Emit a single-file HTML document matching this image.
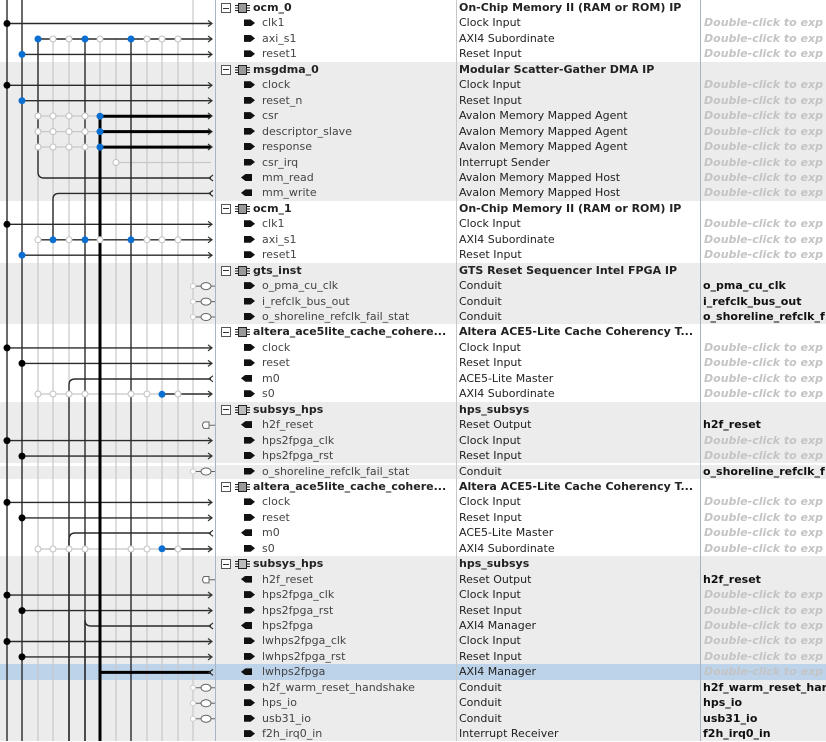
<!DOCTYPE html>
<html><head><meta charset="utf-8"><style>
body{margin:0;width:826px;height:741px;overflow:hidden;background:#fff;font-family:"DejaVu Sans","Liberation Sans",sans-serif;font-size:11px;position:relative}
.r{position:absolute;left:0;width:826px;height:15.45px}
.w{background:#fff}.g{background:#ececec}.s{background:#bcd3ea}
.t{position:absolute;white-space:nowrap;line-height:15px;top:0}
.n{left:262px;color:#444}
.gn{left:253px;font-weight:bold;color:#222}
.d{left:459px;color:#222}
.gd{font-weight:bold}
.e{left:704px;color:#c4c4c4;font-style:italic;font-weight:bold}
.ex{left:703px;color:#111;font-weight:bold}
.box{position:absolute;left:221px;top:3px;width:8px;height:8px;border:1px solid #555;background:#fff}
.box:after{content:"";position:absolute;left:1px;top:3.5px;width:6px;height:1px;background:#333}
.chip{position:absolute;left:238px;top:3px;width:7px;height:8px;background:#999;border:1px solid #222}
.chip:before,.chip:after{content:"";position:absolute;top:1px;width:3px;height:6px;background:repeating-linear-gradient(#222 0 1px,transparent 1px 2.5px)}
.chip:before{left:-4px}.chip:after{left:8px}
.pi{position:absolute;left:244px;top:4px;width:11px;height:7px;background:#111;clip-path:polygon(0 0,60% 0,100% 50%,60% 100%,0 100%)}
.out{left:241px;clip-path:polygon(40% 0,100% 0,100% 100%,40% 100%,0 50%)}
.vl{position:absolute;top:0;width:1px;height:741px}
</style></head><body>
<div class="r w" style="top:0px;height:61.8px"></div>
<div class="r g" style="top:61.8px;height:139px"></div>
<div class="r w" style="top:200.85px;height:61.8px"></div>
<div class="r g" style="top:262.65px;height:61.8px"></div>
<div class="r w" style="top:324.45px;height:77.25px"></div>
<div class="r g" style="top:401.7px;height:61.8px"></div>
<div class="r g" style="top:465px;height:15px"></div>
<div class="r w" style="top:478.95px;height:77.25px"></div>
<div class="r g" style="top:556.2px;height:185px"></div>
<div class="r s" style="top:664.35px"></div>
<div style="position:absolute;left:0;top:465px;width:215px;height:1px;background:#fff"></div>
<div class="vl" style="left:215px;background:#a8b4c4"></div>
<div class="vl" style="left:456px;background:#c8c8c8"></div>
<div class="vl" style="left:700px;background:#a8b4c4"></div>

<svg width="216" height="741" style="position:absolute;left:0;top:0" fill="none">
<g stroke="#c8c8c8" stroke-width="1.2">
<line x1="38" y1="39" x2="38" y2="741"/><line x1="53" y1="39" x2="53" y2="741"/><line x1="69" y1="39" x2="69" y2="741"/>
<line x1="116" y1="39" x2="116" y2="741"/><line x1="147" y1="39" x2="147" y2="741"/><line x1="162" y1="39" x2="162" y2="741"/><line x1="178" y1="39" x2="178" y2="741"/><line x1="193" y1="0" x2="193" y2="741"/>
<line x1="100" y1="39" x2="100" y2="116"/>
<line x1="38" y1="116" x2="100" y2="116"/><line x1="38" y1="131.6" x2="100" y2="131.6"/><line x1="38" y1="147" x2="100" y2="147"/>
<line x1="116" y1="162.5" x2="211" y2="162.5"/>
<line x1="38" y1="394" x2="162" y2="394"/><line x1="38" y1="549" x2="162" y2="549"/>
</g>
<g stroke="#2a2a2a" stroke-width="1.4">
<line x1="7" y1="0" x2="7" y2="741"/><line x1="22" y1="0" x2="22" y2="741"/>
<path d="M38 39 V172 Q38 178 44 178 H211"/>
<path d="M211 193.4 H59 Q53 193.4 53 199 V240"/>
<line x1="85" y1="39" x2="85" y2="741"/><line x1="131" y1="39" x2="131" y2="741"/>
<path d="M69 741 V385 Q69 379 75 379 H211"/>
<path d="M69 741 V540 Q69 533 75 533 H211"/>
<path d="M85 741 V620 Q85 626 91 626 H211"/>
<line x1="162" y1="394" x2="211" y2="394"/><line x1="162" y1="549" x2="211" y2="549"/>
<line x1="7" y1="23.5" x2="211" y2="23.5"/><line x1="38" y1="39" x2="211" y2="39"/><line x1="22" y1="54.4" x2="211" y2="54.4"/>
<line x1="7" y1="85.3" x2="211" y2="85.3"/><line x1="22" y1="100.7" x2="211" y2="100.7"/>
<line x1="7" y1="224.3" x2="211" y2="224.3"/><line x1="38" y1="239.8" x2="211" y2="239.8"/><line x1="22" y1="255.2" x2="211" y2="255.2"/>
<line x1="7" y1="347.9" x2="211" y2="347.9"/><line x1="22" y1="363.4" x2="211" y2="363.4"/>
<line x1="7" y1="440.6" x2="211" y2="440.6"/><line x1="22" y1="456.1" x2="211" y2="456.1"/>
<line x1="7" y1="502.4" x2="211" y2="502.4"/><line x1="22" y1="517.9" x2="211" y2="517.9"/>
<line x1="7" y1="595.1" x2="211" y2="595.1"/><line x1="22" y1="610.6" x2="211" y2="610.6"/>
<line x1="7" y1="641.5" x2="211" y2="641.5"/><line x1="22" y1="656.9" x2="211" y2="656.9"/>
</g>
<g stroke="#000" stroke-width="3">
<line x1="100" y1="116" x2="100" y2="741"/>
<line x1="100" y1="116.2" x2="211" y2="116.2"/><line x1="100" y1="131.6" x2="211" y2="131.6"/><line x1="100" y1="147.1" x2="211" y2="147.1"/>
<line x1="100" y1="672.4" x2="211" y2="672.4"/>
</g>
<g stroke="#333" stroke-width="1.2">
<path d="M208 20.5 L212 23.5 L208 26.5 M208 36 L212 39 L208 42 M208 51.4 L212 54.4 L208 57.4 M208 82.3 L212 85.3 L208 88.3 M208 97.7 L212 100.7 L208 103.7 M208 113 L212 116 L208 119 M208 128.6 L212 131.6 L208 134.6 M208 144 L212 147 L208 150 M208 221.3 L212 224.3 L208 227.3 M208 236.8 L212 239.8 L208 242.8 M208 252.2 L212 255.2 L208 258.2 M208 344.9 L212 347.9 L208 350.9 M208 360.4 L212 363.4 L208 366.4 M208 391 L212 394 L208 397 M208 437.6 L212 440.6 L208 443.6 M208 453 L212 456 L208 459 M208 499.4 L212 502.4 L208 505.4 M208 514.9 L212 517.9 L208 520.9 M208 546 L212 549 L208 552 M208 592 L212 595 L208 598 M208 607.6 L212 610.6 L208 613.6 M208 638.5 L212 641.5 L208 644.5 M208 654 L212 657 L208 660"/>
<path d="M213 175 L209 178 L213 181 M213 190.4 L209 193.4 L213 196.4 M213 375.8 L209 378.8 L213 381.8 M213 530.3 L209 533.3 L213 536.3 M213 623 L209 626 L213 629 M213 669.4 L209 672.4 L213 675.4"/>
</g>
<g fill="#fff" stroke="#c0c0c0" stroke-width="1">
<circle cx="53" cy="39" r="3"/><circle cx="69" cy="39" r="3"/><circle cx="100" cy="39" r="3"/><circle cx="147" cy="39" r="3"/><circle cx="162" cy="39" r="3"/><circle cx="178" cy="39" r="3"/>
<circle cx="38" cy="116" r="3"/><circle cx="53" cy="116" r="3"/><circle cx="69" cy="116" r="3"/><circle cx="85" cy="116" r="3"/>
<circle cx="38" cy="131.6" r="3"/><circle cx="53" cy="131.6" r="3"/><circle cx="69" cy="131.6" r="3"/><circle cx="85" cy="131.6" r="3"/>
<circle cx="38" cy="147" r="3"/><circle cx="53" cy="147" r="3"/><circle cx="69" cy="147" r="3"/><circle cx="85" cy="147" r="3"/><circle cx="116" cy="162.5" r="3"/>
<circle cx="38" cy="239.8" r="3"/><circle cx="69" cy="239.8" r="3"/><circle cx="100" cy="239.8" r="3"/><circle cx="147" cy="239.8" r="3"/><circle cx="162" cy="239.8" r="3"/><circle cx="178" cy="239.8" r="3"/>
<circle cx="38" cy="394" r="3"/><circle cx="53" cy="394" r="3"/><circle cx="69" cy="394" r="3"/><circle cx="85" cy="394" r="3"/><circle cx="131" cy="394" r="3"/><circle cx="147" cy="394" r="3"/><circle cx="178" cy="394" r="3"/>
<circle cx="38" cy="549" r="3"/><circle cx="53" cy="549" r="3"/><circle cx="69" cy="549" r="3"/><circle cx="85" cy="549" r="3"/><circle cx="131" cy="549" r="3"/><circle cx="147" cy="549" r="3"/><circle cx="178" cy="549" r="3"/>
</g>
<g fill="#0a6fd0">
<circle cx="38" cy="39" r="3.5"/><circle cx="85" cy="39" r="3.5"/><circle cx="131" cy="39" r="3.5"/><circle cx="22" cy="54.4" r="3.5"/><circle cx="22" cy="100.7" r="3.5"/>
<circle cx="100" cy="116.2" r="3.5"/><circle cx="100" cy="131.6" r="3.5"/><circle cx="100" cy="147.1" r="3.5"/>
<circle cx="53" cy="239.8" r="3.5"/><circle cx="85" cy="239.8" r="3.5"/><circle cx="131" cy="239.8" r="3.5"/><circle cx="22" cy="255.2" r="3.5"/>
<circle cx="162" cy="394.3" r="3.5"/><circle cx="162" cy="548.8" r="3.5"/>
</g>
<g fill="#000">
<circle cx="7" cy="23.5" r="3.5"/><circle cx="7" cy="85.3" r="3.5"/><circle cx="7" cy="224.3" r="3.5"/><circle cx="7" cy="347.9" r="3.5"/><circle cx="22" cy="363.4" r="3.5"/>
<circle cx="7" cy="440.6" r="3.5"/><circle cx="22" cy="456.1" r="3.5"/><circle cx="7" cy="502.4" r="3.5"/><circle cx="22" cy="517.9" r="3.5"/>
<circle cx="7" cy="595.1" r="3.5"/><circle cx="22" cy="610.6" r="3.5"/><circle cx="7" cy="641.5" r="3.5"/><circle cx="22" cy="656.9" r="3.5"/>
</g>
<g stroke="#666" stroke-width="1" fill="#fff">
<path d="M196 286.1 H201 M211 286.1 H215 M196 301.6 H201 M211 301.6 H215 M196 317 H201 M211 317 H215 M196 471.5 H201 M211 471.5 H215 M196 687.8 H201 M211 687.8 H215 M196 703.3 H201 M211 703.3 H215 M196 718.7 H201 M211 718.7 H215"/>
<ellipse cx="206" cy="286.1" rx="5" ry="3.5"/><ellipse cx="206" cy="301.6" rx="5" ry="3.5"/><ellipse cx="206" cy="317" rx="5" ry="3.5"/><ellipse cx="206" cy="471.5" rx="5" ry="3.5"/><ellipse cx="206" cy="687.8" rx="5" ry="3.5"/><ellipse cx="206" cy="703.3" rx="5" ry="3.5"/><ellipse cx="206" cy="718.7" rx="5" ry="3.5"/>
<path d="M209 422 H204 Q201 425.2 204 428.4 H209 Z M209 425.2 H215 M209 576.5 H204 Q201 579.7 204 582.9 H209 Z M209 579.7 H215"/>
</g>
<g fill="#fff" stroke="#ccc"><circle cx="193" cy="286.1" r="2.5"/><circle cx="193" cy="301.6" r="2.5"/><circle cx="193" cy="317" r="2.5"/><circle cx="193" cy="471.5" r="2.5"/><circle cx="193" cy="687.8" r="2.5"/><circle cx="193" cy="703.3" r="2.5"/><circle cx="193" cy="718.7" r="2.5"/></g>
</svg>

<div class="r" style="top:0px"><div class="box"></div><div class="chip"></div><span class="t gn">ocm_0</span><span class="t d gd">On-Chip Memory II (RAM or ROM) IP</span></div>
<div class="r" style="top:15.45px"><div class="pi"></div><span class="t n">clk1</span><span class="t d">Clock Input</span><span class="t e">Double-click to exp</span></div>
<div class="r" style="top:30.9px"><div class="pi"></div><span class="t n">axi_s1</span><span class="t d">AXI4 Subordinate</span><span class="t e">Double-click to exp</span></div>
<div class="r" style="top:46.35px"><div class="pi"></div><span class="t n">reset1</span><span class="t d">Reset Input</span><span class="t e">Double-click to exp</span></div>
<div class="r" style="top:61.8px"><div class="box"></div><div class="chip"></div><span class="t gn">msgdma_0</span><span class="t d gd">Modular Scatter-Gather DMA IP</span></div>
<div class="r" style="top:77.25px"><div class="pi"></div><span class="t n">clock</span><span class="t d">Clock Input</span><span class="t e">Double-click to exp</span></div>
<div class="r" style="top:92.7px"><div class="pi"></div><span class="t n">reset_n</span><span class="t d">Reset Input</span><span class="t e">Double-click to exp</span></div>
<div class="r" style="top:108.15px"><div class="pi"></div><span class="t n">csr</span><span class="t d">Avalon Memory Mapped Agent</span><span class="t e">Double-click to exp</span></div>
<div class="r" style="top:123.6px"><div class="pi"></div><span class="t n">descriptor_slave</span><span class="t d">Avalon Memory Mapped Agent</span><span class="t e">Double-click to exp</span></div>
<div class="r" style="top:139.05px"><div class="pi"></div><span class="t n">response</span><span class="t d">Avalon Memory Mapped Agent</span><span class="t e">Double-click to exp</span></div>
<div class="r" style="top:154.5px"><div class="pi"></div><span class="t n">csr_irq</span><span class="t d">Interrupt Sender</span><span class="t e">Double-click to exp</span></div>
<div class="r" style="top:169.95px"><div class="pi out"></div><span class="t n">mm_read</span><span class="t d">Avalon Memory Mapped Host</span><span class="t e">Double-click to exp</span></div>
<div class="r" style="top:185.4px"><div class="pi out"></div><span class="t n">mm_write</span><span class="t d">Avalon Memory Mapped Host</span><span class="t e">Double-click to exp</span></div>
<div class="r" style="top:200.85px"><div class="box"></div><div class="chip"></div><span class="t gn">ocm_1</span><span class="t d gd">On-Chip Memory II (RAM or ROM) IP</span></div>
<div class="r" style="top:216.3px"><div class="pi"></div><span class="t n">clk1</span><span class="t d">Clock Input</span><span class="t e">Double-click to exp</span></div>
<div class="r" style="top:231.75px"><div class="pi"></div><span class="t n">axi_s1</span><span class="t d">AXI4 Subordinate</span><span class="t e">Double-click to exp</span></div>
<div class="r" style="top:247.2px"><div class="pi"></div><span class="t n">reset1</span><span class="t d">Reset Input</span><span class="t e">Double-click to exp</span></div>
<div class="r" style="top:262.65px"><div class="box"></div><div class="chip"></div><span class="t gn">gts_inst</span><span class="t d gd">GTS Reset Sequencer Intel FPGA IP</span></div>
<div class="r" style="top:278.1px"><div class="pi"></div><span class="t n">o_pma_cu_clk</span><span class="t d">Conduit</span><span class="t ex">o_pma_cu_clk</span></div>
<div class="r" style="top:293.55px"><div class="pi"></div><span class="t n">i_refclk_bus_out</span><span class="t d">Conduit</span><span class="t ex">i_refclk_bus_out</span></div>
<div class="r" style="top:309px"><div class="pi"></div><span class="t n">o_shoreline_refclk_fail_stat</span><span class="t d">Conduit</span><span class="t ex">o_shoreline_refclk_f</span></div>
<div class="r" style="top:324.45px"><div class="box"></div><div class="chip"></div><span class="t gn">altera_ace5lite_cache_cohere...</span><span class="t d gd">Altera ACE5-Lite Cache Coherency T...</span></div>
<div class="r" style="top:339.9px"><div class="pi"></div><span class="t n">clock</span><span class="t d">Clock Input</span><span class="t e">Double-click to exp</span></div>
<div class="r" style="top:355.35px"><div class="pi"></div><span class="t n">reset</span><span class="t d">Reset Input</span><span class="t e">Double-click to exp</span></div>
<div class="r" style="top:370.8px"><div class="pi out"></div><span class="t n">m0</span><span class="t d">ACE5-Lite Master</span><span class="t e">Double-click to exp</span></div>
<div class="r" style="top:386.25px"><div class="pi"></div><span class="t n">s0</span><span class="t d">AXI4 Subordinate</span><span class="t e">Double-click to exp</span></div>
<div class="r" style="top:401.7px"><div class="box"></div><div class="chip" style="background:#bbb"></div><span class="t gn">subsys_hps</span><span class="t d gd">hps_subsys</span></div>
<div class="r" style="top:417.15px"><div class="pi out"></div><span class="t n">h2f_reset</span><span class="t d">Reset Output</span><span class="t ex">h2f_reset</span></div>
<div class="r" style="top:432.6px"><div class="pi"></div><span class="t n">hps2fpga_clk</span><span class="t d">Clock Input</span><span class="t e">Double-click to exp</span></div>
<div class="r" style="top:448.05px"><div class="pi"></div><span class="t n">hps2fpga_rst</span><span class="t d">Reset Input</span><span class="t e">Double-click to exp</span></div>
<div class="r" style="top:463.5px"><div class="pi"></div><span class="t n">o_shoreline_refclk_fail_stat</span><span class="t d">Conduit</span><span class="t ex">o_shoreline_refclk_f</span></div>
<div class="r" style="top:478.95px"><div class="box"></div><div class="chip"></div><span class="t gn">altera_ace5lite_cache_cohere...</span><span class="t d gd">Altera ACE5-Lite Cache Coherency T...</span></div>
<div class="r" style="top:494.4px"><div class="pi"></div><span class="t n">clock</span><span class="t d">Clock Input</span><span class="t e">Double-click to exp</span></div>
<div class="r" style="top:509.85px"><div class="pi"></div><span class="t n">reset</span><span class="t d">Reset Input</span><span class="t e">Double-click to exp</span></div>
<div class="r" style="top:525.3px"><div class="pi out"></div><span class="t n">m0</span><span class="t d">ACE5-Lite Master</span><span class="t e">Double-click to exp</span></div>
<div class="r" style="top:540.75px"><div class="pi"></div><span class="t n">s0</span><span class="t d">AXI4 Subordinate</span><span class="t e">Double-click to exp</span></div>
<div class="r" style="top:556.2px"><div class="box"></div><div class="chip" style="background:#bbb"></div><span class="t gn">subsys_hps</span><span class="t d gd">hps_subsys</span></div>
<div class="r" style="top:571.65px"><div class="pi out"></div><span class="t n">h2f_reset</span><span class="t d">Reset Output</span><span class="t ex">h2f_reset</span></div>
<div class="r" style="top:587.1px"><div class="pi"></div><span class="t n">hps2fpga_clk</span><span class="t d">Clock Input</span><span class="t e">Double-click to exp</span></div>
<div class="r" style="top:602.55px"><div class="pi"></div><span class="t n">hps2fpga_rst</span><span class="t d">Reset Input</span><span class="t e">Double-click to exp</span></div>
<div class="r" style="top:618px"><div class="pi out"></div><span class="t n">hps2fpga</span><span class="t d">AXI4 Manager</span><span class="t e">Double-click to exp</span></div>
<div class="r" style="top:633.45px"><div class="pi"></div><span class="t n">lwhps2fpga_clk</span><span class="t d">Clock Input</span><span class="t e">Double-click to exp</span></div>
<div class="r" style="top:648.9px"><div class="pi"></div><span class="t n">lwhps2fpga_rst</span><span class="t d">Reset Input</span><span class="t e">Double-click to exp</span></div>
<div class="r" style="top:664.35px"><div class="pi out"></div><span class="t n">lwhps2fpga</span><span class="t d">AXI4 Manager</span><span class="t e">Double-click to exp</span></div>
<div class="r" style="top:679.8px"><div class="pi"></div><span class="t n">h2f_warm_reset_handshake</span><span class="t d">Conduit</span><span class="t ex">h2f_warm_reset_har</span></div>
<div class="r" style="top:695.25px"><div class="pi"></div><span class="t n">hps_io</span><span class="t d">Conduit</span><span class="t ex">hps_io</span></div>
<div class="r" style="top:710.7px"><div class="pi"></div><span class="t n">usb31_io</span><span class="t d">Conduit</span><span class="t ex">usb31_io</span></div>
<div class="r" style="top:726.15px"><div class="pi"></div><span class="t n">f2h_irq0_in</span><span class="t d">Interrupt Receiver</span><span class="t ex">f2h_irq0_in</span></div>
</body></html>
